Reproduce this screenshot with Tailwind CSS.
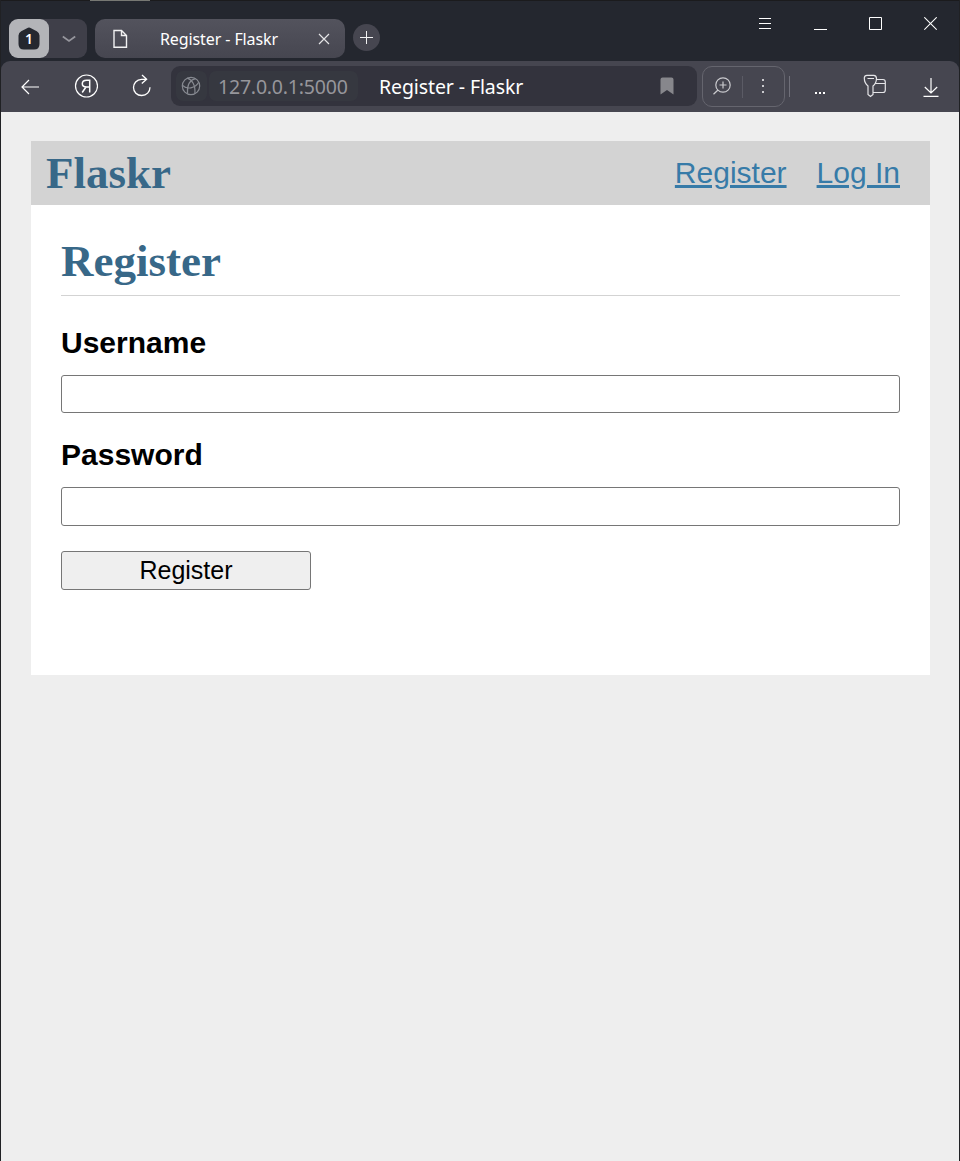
<!DOCTYPE html>
<html lang="en">
<head>
<meta charset="utf-8">
<title>Register - Flaskr</title>
<script src="https://cdn.jsdelivr.net/npm/@tailwindcss/browser@4"></script>
</head>
<body class="bg-[#24272f]">
<div class="w-[960px] h-[1161px] overflow-hidden flex flex-col border-x border-[#202124] bg-[#24272f] font-['Noto_Sans',sans-serif]">
  <!-- Tab strip -->
  <header class="relative h-[61px] shrink-0 flex items-start pl-2 border-t border-[#1b1b1d]">
    <span class="absolute -top-px left-[89px] w-[60px] h-px bg-[#777873]"></span>
    <div class="mt-[18px] w-[78px] h-[39px] rounded-[9px] bg-[#3f3f49] flex">
      <div class="w-[40px] h-[39px] rounded-[9px] bg-[#b3b4b8] flex items-center justify-center">
        <svg class="w-[22px] h-[23px]" viewBox="0 0 22 23"><path d="M9 1.200 Q11 0 13 1.200 L18.800 4.200 Q21.300 5.500 21.500 8.500 L21.500 17 Q21.500 22.500 16 22.500 L6 22.500 Q.5 22.500 .5 17 L.5 8.500 Q.7 5.500 3.200 4.200Z" fill="#24272f"/><text x="11" y="17" text-anchor="middle" font-family="Noto Sans" font-size="14" font-weight="600" fill="#fff">1</text></svg>
      </div>
      <div class="flex-1 flex items-center justify-center pl-px">
        <svg class="w-[14px] h-[8px]" viewBox="0 0 14 8" fill="none" stroke="#96969d" stroke-width="1.7"><path d="M.8 1.500 L7 6 L13.200 1.500"/></svg>
      </div>
    </div>
    <div class="ml-2 mt-[18px] w-[250px] h-[39px] rounded-[10px] bg-linear-to-b from-[#53535d] to-[#464650] flex items-center pl-[18px] pr-[15px]">
      <svg class="w-[15px] h-[20px] shrink-0" viewBox="0 0 15 20" fill="none" stroke="#f1f1f2" stroke-width="1.4"><path d="M1 1.500H8.500L13.500 6.500V18.200H1Z M8.500 1.500V6.500H13.500"/></svg>
      <span class="ml-[32px] flex-1 text-[16px] tracking-[-0.1px] text-white whitespace-nowrap">Register - Flaskr</span>
      <svg class="w-[12px] h-[12px] shrink-0" viewBox="0 0 12 12" stroke="#e4e4e6" stroke-width="1.2"><path d="M1 1L11 11M11 1L1 11"/></svg>
    </div>
    <div class="ml-2 mt-[23px] size-[27px] rounded-full bg-[#464650] flex items-center justify-center">
      <svg class="size-[13px]" viewBox="0 0 13 13" stroke="#f1f1f2" stroke-width="1"><path d="M6.500 0V13M0 6.500H13"/></svg>
    </div>
    <div class="ml-auto mr-[22px] mt-[16px] flex">
      <svg class="w-[13px] h-[14px] mr-[42px]" viewBox="0 0 13 14" stroke="#fff" stroke-width="1"><path d="M0 1.500H12M0 6.500H12M0 11.500H12"/></svg>
      <svg class="w-[13px] h-[14px] mr-[42px]" viewBox="0 0 13 14" stroke="#fff" stroke-width="1"><path d="M0 12.500H13"/></svg>
      <svg class="w-[13px] h-[14px] mr-[42px]" viewBox="0 0 13 14" fill="none" stroke="#fff" stroke-width="1"><path d="M.5 .5H12.500V12.500H.5Z"/></svg>
      <svg class="w-[13px] h-[14px]" viewBox="0 0 13 14" stroke="#fff" stroke-width="1.1"><path d="M.3 .3L12.700 12.700M12.700 .3L.3 12.700"/></svg>
    </div>
  </header>

  <!-- Toolbar -->
  <nav class="h-[51px] shrink-0 rounded-t-[9px] bg-[#464650] flex items-center pr-[20px]">
    <svg class="ml-[20px] w-[19px] h-[16px]" viewBox="0 0 19 16" fill="none" stroke="#fff" stroke-width="1.2"><path d="M18 8H1M8 1L1 8L8 15"/></svg>
    <svg class="ml-[34px] mb-px size-[24px]" viewBox="0 0 24 24" fill="none" stroke="#fff"><circle cx="12.500" cy="12" r="11" stroke-width="1.200"/><path d="M15.700 18.500V6.200H12.700C9.500 6.200 8.300 7.900 8.300 9.800C8.300 11.800 9.800 13 12.500 13H15.700M12 13L8.200 18.500" stroke-width="1.500"/></svg>
    <svg class="ml-[34px] mb-px w-[20px] h-[24px]" viewBox="0 0 20 24" fill="none" stroke="#fff" stroke-width="1.300"><path d="M14.500 5.300H9.500C4.500 5.500 1.500 9.500 1.500 13.500C1.500 18 5 21.500 9.700 21.500C14.500 21.500 18 18 18 13.300M10 1L14.600 5.300L9.800 9.500"/></svg>
    <div class="ml-[19px] mb-px w-[526px] h-[40px] rounded-[9px] bg-[#33333d] flex items-center pl-[5px] pr-[23px]">
      <div class="w-[31px] h-[30px] rounded-[7px] bg-[#363840] flex items-center pl-[5px]">
        <svg class="size-[20px]" viewBox="0 0 20 20" fill="none" stroke="#878a91" stroke-width="1.200"><circle cx="10" cy="10" r="8.700"/><path d="M14.500 2.700C8.500 4 6 10 6.500 17.800M6.300 2.200C11 3.500 14.800 9 13.800 17.800M1.300 9.300C6 13.800 14 12.500 17.700 6.300"/></svg>
      </div>
      <div class="ml-[2px] w-[149px] h-[30px] rounded-[7px] bg-[#363840] flex items-center pl-[9px] text-[19.500px] tracking-[-0.2px] text-[#96969b] whitespace-nowrap"><span class="relative top-px">127.0.0.1:5000</span></div>
      <span class="ml-[21px] relative top-px text-[19.500px] tracking-[-0.1px] text-white whitespace-nowrap">Register - Flaskr</span>
      <svg class="ml-auto w-[14px] h-[18px]" viewBox="0 0 14 18"><path d="M2.500 .5H11.500Q13.500 .5 13.500 2.500V17.500L7 13L.5 17.500V2.500Q.5 .5 2.500 .5Z" fill="#87878c"/></svg>
    </div>
    <div class="ml-[5px] w-[83px] h-[41px] rounded-[10px] border border-[#65656e] flex items-center">
      <svg class="ml-[9px] mb-[2px] w-[19px] h-[18px]" viewBox="0 0 19 18" fill="none" stroke="#cacace" stroke-width="1.200"><circle cx="11" cy="8" r="7.200"/><path d="M6 13L1.500 17.300M11 4.500V11.500M7.500 8H14.500"/></svg>
      <span class="ml-[11px] w-px h-[22px] bg-[#5b5b65]"></span>
      <svg class="ml-[19px] mb-[2px] w-[2px] h-[14px]" viewBox="0 0 2 14" fill="#cacace"><path d="M0 0H2V2H0ZM0 6H2V8H0ZM0 12H2V14H0Z"/></svg>
    </div>
    <span class="ml-[4px] w-px h-[21px] bg-[#70707a]"></span>
    <svg class="ml-[25px] mt-[12px] w-[10px] h-[2px]" viewBox="0 0 10 2" fill="#fff"><path d="M0 0H2V2H0ZM4 0H6V2H4ZM8 0H10V2H8Z"/></svg>
    <svg class="ml-[38px] mb-[2px] w-[24px] h-[24px]" viewBox="0 0 24 24" fill="none" stroke="#e5e5e8" stroke-width="1.200"><path d="M4 1.300H10.700Q13.500 1.300 13.500 4.500Q13.300 9.500 10 12V20.500L7.500 22.500L5 20.500V12Q1.300 9 1.300 4Q1.500 1.300 4 1.300ZM4.500 4.500H11M13.500 5.500H20Q22.300 5.500 22.300 8V16Q22.300 18.500 20 18.500H10M12.500 9.500H22.300"/></svg>
    <svg class="ml-auto w-[16px] h-[20px]" viewBox="0 0 16 20" fill="none" stroke="#fff" stroke-width="1.200"><path d="M8 1V16M1.800 10L8 16L14.200 10M.5 19.300H15.500"/></svg>
  </nav>

  <!-- Page -->
  <main class="flex-1 bg-[#eee] px-[30px] pr-[29px] pt-[29px] font-['Liberation_Sans',sans-serif] text-black">
    <div class="w-[899px]">
      <div class="h-[64px] bg-[lightgray] flex items-center pl-[15px] pr-[30px]">
        <h1 class="flex-1 font-['Liberation_Serif',serif] font-bold text-[45px] leading-[64px] text-[#377ba8]"><a class="text-[#386888]">Flaskr</a></h1>
        <ul class="flex gap-[30px] text-[30px] leading-[64px] text-[#377ba8]">
          <li><a href="#" class="underline decoration-[3px]">Register</a></li>
          <li><a href="#" class="underline decoration-[3px]">Log In</a></li>
        </ul>
      </div>
      <section class="h-[470px] bg-white px-[30px] pt-[30px]">
        <h1 class="h-[61px] border-b border-[lightgray] font-['Liberation_Serif',serif] font-bold text-[45px] leading-[52px] text-[#386888]">Register</h1>
        <form class="flex flex-col items-start">
          <label class="mt-[29px] text-[30px] leading-[35px] font-bold">Username</label>
          <input class="mt-[15px] w-full h-[38px] rounded-[3px] border border-[#767676] bg-white">
          <label class="mt-[24px] text-[30px] leading-[35px] font-bold">Password</label>
          <input type="password" class="mt-[15px] w-full h-[39px] rounded-[3px] border border-[#767676] bg-white">
          <button type="button" class="mt-[25px] w-[250px] h-[39px] rounded-[3px] border border-[#767676] bg-[#efefef] text-[25px] leading-[37px]">Register</button>
        </form>
      </section>
    </div>
  </main>
</div>
</body>
</html>
